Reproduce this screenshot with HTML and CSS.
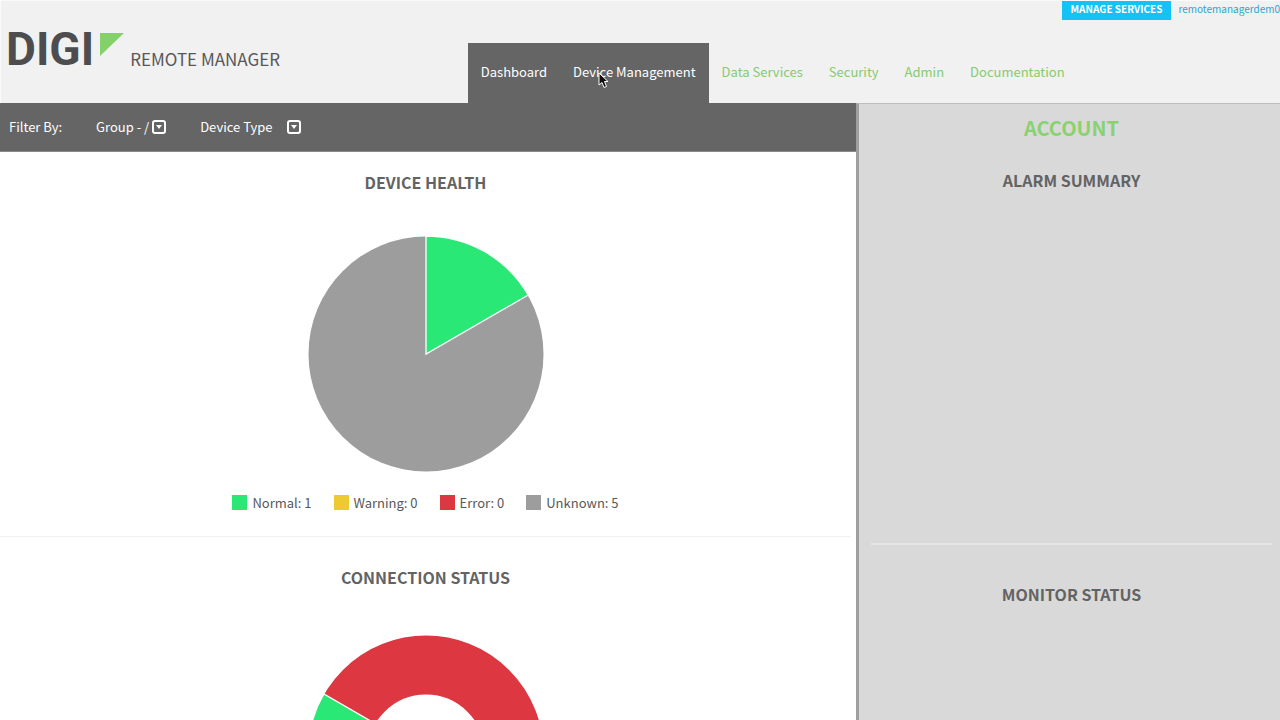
FILE: index.html
```html
<!DOCTYPE html>
<html lang="en">
<head>
<meta charset="utf-8">
<meta name="viewport" content="width=device-width, initial-scale=1">
<title>Digi Remote Manager</title>
<link rel="stylesheet" href="styles.css">
</head>
<body>
<header class="header">
  <div class="utility">
    <button class="manage" type="button">MANAGE SERVICES</button>
    <a class="user" href="#">remotemanagerdem0</a>
  </div>
  <div class="masthead">
    <a class="brand" href="#">
      <span class="wordmark">DIGI</span>
      <svg class="mark" width="24" height="23" viewBox="0 0 24 23" aria-hidden="true"><path d="M0 0H24L0 23Z" fill="#84d16a"/></svg>
      <span class="product">REMOTE MANAGER</span>
    </a>
    <nav class="nav">
      <a class="tab active" href="#">Dashboard</a>
      <a class="tab active" href="#">Device Management
        <svg class="pointer" width="11" height="17" viewBox="0 0 11 17" aria-hidden="true"><path d="M1 1V13L4 10.500L6 15.500L8.500 14.500L6.500 9.500H10Z" fill="#111" stroke="#fff"/></svg>
      </a>
      <a class="tab" href="#">Data Services</a>
      <a class="tab" href="#">Security</a>
      <a class="tab" href="#">Admin</a>
      <a class="tab" href="#">Documentation</a>
    </nav>
  </div>
</header>
<div class="content">
  <main class="main">
    <div class="filters">
      <span class="filter-label">Filter By:</span>
      <button class="filter" type="button">Group - /
        <svg class="drop" width="14" height="14" viewBox="0 0 14 14" aria-hidden="true"><rect x="1" y="1" width="12" height="12" rx="2" fill="none" stroke="#fff" stroke-width="2"/><path d="M4 5H10L7 9Z" fill="#fff"/></svg>
      </button>
      <button class="filter wide" type="button">Device Type
        <svg class="drop" width="14" height="14" viewBox="0 0 14 14" aria-hidden="true"><rect x="1" y="1" width="12" height="12" rx="2" fill="none" stroke="#fff" stroke-width="2"/><path d="M4 5H10L7 9Z" fill="#fff"/></svg>
      </button>
    </div>
    <section class="panel health">
      <h2 class="title">DEVICE HEALTH</h2>
      <svg class="chart" width="236" height="236" viewBox="-118 -118 236 236" role="img" aria-label="Device health">
        <circle r="117.500" fill="#9d9d9d"/>
        <path d="M0 0V-118A118 118 0 0 1 102.200 -59Z" fill="#2ae876" stroke="#fff" stroke-width="1.300"/>
      </svg>
      <ul class="legend">
        <li class="key"><span class="swatch normal"></span>Normal: 1</li>
        <li class="key"><span class="swatch warning"></span>Warning: 0</li>
        <li class="key"><span class="swatch error"></span>Error: 0</li>
        <li class="key"><span class="swatch unknown"></span>Unknown: 5</li>
      </ul>
    </section>
    <section class="panel connection">
      <h2 class="title">CONNECTION STATUS</h2>
      <svg class="chart" width="236" height="236" viewBox="-118 -118 236 236" role="img" aria-label="Connection status">
        <circle r="88" fill="none" stroke="#dd3842" stroke-width="59"/>
        <path d="M-102.200 -59A118 118 0 0 0 -102.200 59L-50.700 29.300A58.500 58.500 0 0 1 -50.700 -29.300Z" fill="#2ae876" stroke="#fff" stroke-width="1.300"/>
      </svg>
    </section>
  </main>
  <aside class="side">
    <section class="alarm">
      <h1 class="account">ACCOUNT</h1>
      <h2 class="title">ALARM SUMMARY</h2>
    </section>
    <section class="monitor">
      <h2 class="title">MONITOR STATUS</h2>
    </section>
  </aside>
</div>
</body>
</html>
```
FILE: styles.css
```css
* { box-sizing: border-box; }

body {
  display: flex;
  flex-direction: column;
  height: 100vh;
  margin: 0;
  overflow: hidden;
  background: #fff;
  color: #58585a;
  font-family: "Noto Sans CJK SC", "Open Sans", sans-serif;
  font-size: 13px;
  line-height: 20px;
}

a { color: inherit; text-decoration: none; }

button {
  border: 0;
  padding: 0;
  background: none;
  color: inherit;
  font: inherit;
}

.header {
  flex: none;
  background: #f1f1f1;
  border-top: 1px solid #fafafa;
  border-left: 1px solid #fafafa;
}

.utility {
  display: flex;
  justify-content: flex-end;
  gap: 7px;
  height: 19px;
  font-size: 10px;
  line-height: 16px;
}

.manage {
  padding: 0 9px 4px;
  background: #14c2f5;
  color: #fff;
  font-weight: 700;
}

.user { color: #2ba6cb; }

.masthead {
  display: flex;
  align-items: flex-end;
  height: 83px;
}

.brand {
  display: flex;
  flex: none;
  align-items: flex-start;
  width: 36.500%;
  height: 83px;
  padding-left: 5px;
}

.wordmark {
  color: #4d4d4f;
  font-family: Roboto, sans-serif;
  font-size: 46px;
  font-weight: 700;
  line-height: 58px;
}

.mark { margin: 13px 6px 0 6px; }

.product {
  padding-top: 27px;
  font-size: 17px;
  line-height: 24px;
  white-space: nowrap;
}

.nav { display: flex; height: 60px; }

.tab {
  position: relative;
  padding: 0 13px;
  color: #84cc6c;
  line-height: 58px;
  white-space: nowrap;
}

.active { background: #656565; color: #fff; }

.pointer { position: absolute; left: 38px; top: 29px; }

.content {
  display: grid;
  flex: 1;
  grid-template-columns: 107fr 53fr;
  min-height: 0;
}

.main { min-width: 0; overflow: hidden; }

.filters {
  display: flex;
  height: 49px;
  padding-left: 9px;
  background: #656565;
  border-bottom: 1px solid #8a8a8a;
  color: #fff;
}

.filter-label { margin-right: 34px; line-height: 48px; }

.filter {
  display: flex;
  align-items: center;
  gap: 3px;
  margin-right: 34px;
}

.wide { gap: 14px; }

.panel {
  display: flex;
  flex-direction: column;
  align-items: center;
  margin-right: 5px;
}

.health {
  height: 385px;
  border-bottom: 1px solid #f1f1f1;
}

.title {
  margin: 0;
  color: #636363;
  font-size: 16px;
  font-weight: 700;
  line-height: 24px;
}

.panel .title { padding-top: 18px; }

.chart { flex: none; margin-top: 42px; }

.connection .title { padding-top: 28px; }

.connection .chart { margin-top: 46px; }

.legend {
  display: flex;
  gap: 22px;
  margin: 21px 0 0;
  padding: 0;
  list-style: none;
}

.key { display: flex; gap: 5px; }

.swatch { width: 15px; height: 15px; margin-top: 2px; }

.normal { background: #2ae876; }
.warning { background: #edc932; }
.error { background: #dd3842; }
.unknown { background: #9d9d9d; }

.side {
  padding: 0 8px 0 12px;
  background: #d9d9d9;
  border-top: 1px solid #bdbdbd;
  border-left: 3px solid #a0a0a0;
  text-align: center;
}

.alarm {
  height: 441px;
  border-bottom: 2px solid #e5e5e5;
}

.account {
  margin: 0 0 26px;
  padding-top: 10px;
  color: #88d26f;
  font-size: 20px;
  font-weight: 700;
  line-height: 28px;
}

.monitor { padding-top: 37px; }
```
